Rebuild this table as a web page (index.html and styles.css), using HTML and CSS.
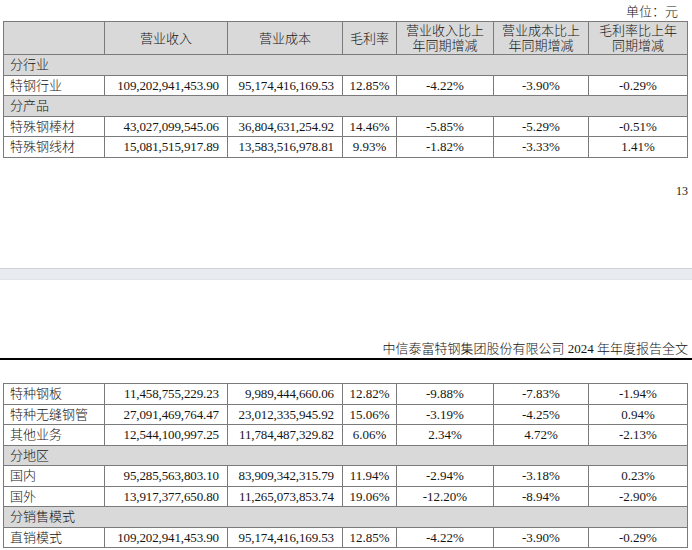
FILE: index.html
```html
<!DOCTYPE html>
<html lang="zh-CN">
<head>
<meta charset="utf-8">
<title>中信泰富特钢集团股份有限公司 2024 年年度报告全文</title>
<link rel="stylesheet" href="styles.css">
</head>
<body>
<div class="page page-top">
  <div class="unit">单位：元</div>
  <table class="data">
    <colgroup>
      <col class="c1"><col class="c2"><col class="c3"><col class="c4"><col class="c5"><col class="c6"><col class="c7">
    </colgroup>
    <thead>
      <tr class="head">
        <th></th>
        <th>营业收入</th>
        <th>营业成本</th>
        <th>毛利率</th>
        <th>营业收入比上<br>年同期增减</th>
        <th>营业成本比上<br>年同期增减</th>
        <th>毛利率比上年<br>同期增减</th>
      </tr>
    </thead>
    <tbody>
      <tr class="section"><td colspan="7">分行业</td></tr>
      <tr><td class="name">特钢行业</td><td class="num">109,202,941,453.90</td><td class="num">95,174,416,169.53</td><td class="pct">12.85%</td><td class="pct">-4.22%</td><td class="pct">-3.90%</td><td class="pct">-0.29%</td></tr>
      <tr class="section"><td colspan="7">分产品</td></tr>
      <tr><td class="name">特殊钢棒材</td><td class="num">43,027,099,545.06</td><td class="num">36,804,631,254.92</td><td class="pct">14.46%</td><td class="pct">-5.85%</td><td class="pct">-5.29%</td><td class="pct">-0.51%</td></tr>
      <tr><td class="name">特殊钢线材</td><td class="num">15,081,515,917.89</td><td class="num">13,583,516,978.81</td><td class="pct">9.93%</td><td class="pct">-1.82%</td><td class="pct">-3.33%</td><td class="pct">1.41%</td></tr>
    </tbody>
  </table>
  <div class="pageno">13</div>
</div>
<div class="page-gap"></div>
<div class="page page-bottom">
  <div class="running-head">中信泰富特钢集团股份有限公司 2024 年年度报告全文</div>
  <div class="body-area">
    <table class="data">
      <colgroup>
        <col class="c1"><col class="c2"><col class="c3"><col class="c4"><col class="c5"><col class="c6"><col class="c7">
      </colgroup>
      <tbody>
        <tr><td class="name">特种钢板</td><td class="num">11,458,755,229.23</td><td class="num">9,989,444,660.06</td><td class="pct">12.82%</td><td class="pct">-9.88%</td><td class="pct">-7.83%</td><td class="pct">-1.94%</td></tr>
        <tr><td class="name">特种无缝钢管</td><td class="num">27,091,469,764.47</td><td class="num">23,012,335,945.92</td><td class="pct">15.06%</td><td class="pct">-3.19%</td><td class="pct">-4.25%</td><td class="pct">0.94%</td></tr>
        <tr><td class="name">其他业务</td><td class="num">12,544,100,997.25</td><td class="num">11,784,487,329.82</td><td class="pct">6.06%</td><td class="pct">2.34%</td><td class="pct">4.72%</td><td class="pct">-2.13%</td></tr>
        <tr class="section"><td colspan="7">分地区</td></tr>
        <tr><td class="name">国内</td><td class="num">95,285,563,803.10</td><td class="num">83,909,342,315.79</td><td class="pct">11.94%</td><td class="pct">-2.94%</td><td class="pct">-3.18%</td><td class="pct">0.23%</td></tr>
        <tr><td class="name">国外</td><td class="num">13,917,377,650.80</td><td class="num">11,265,073,853.74</td><td class="pct">19.06%</td><td class="pct">-12.20%</td><td class="pct">-8.94%</td><td class="pct">-2.90%</td></tr>
        <tr class="section"><td colspan="7">分销售模式</td></tr>
        <tr><td class="name">直销模式</td><td class="num">109,202,941,453.90</td><td class="num">95,174,416,169.53</td><td class="pct">12.85%</td><td class="pct">-4.22%</td><td class="pct">-3.90%</td><td class="pct">-0.29%</td></tr>
      </tbody>
    </table>
  </div>
</div>
</body>
</html>
```

FILE: styles.css
```css
* { box-sizing: border-box; }

html, body {
  margin: 0;
  padding: 0;
  background: #ffffff;
}

body {
  width: 692px;
  height: 550px;
  overflow: hidden;
  font-family: "Liberation Serif", "Noto Sans CJK SC", serif;
  font-size: 13px;
  font-weight: 300;
  color: #151515;
}

.page-top {
  height: 268px;
  padding: 0 5px 0 3px;
}

.unit {
  height: 21px;
  line-height: 21px;
  padding-top: 1px;
  padding-right: 9px;
  text-align: right;
  font-size: 13px;
}

.data {
  width: 684px;
  table-layout: fixed;
  border-collapse: collapse;
}

.data .c1 { width: 101px; }
.data .c2 { width: 123px; }
.data .c3 { width: 115px; }
.data .c4 { width: 54px; }
.data .c5 { width: 97px; }
.data .c6 { width: 95px; }
.data .c7 { width: 99px; }

.data th,
.data td {
  border: 1px solid #7a7a7a;
  padding: 0 6px;
  white-space: nowrap;
  vertical-align: middle;
  line-height: 15px;
}

.data tr { height: 20.5px; }

.data .head { height: 33px; }

.data th {
  background: #d9d9d9;
  font-weight: 300;
  text-align: center;
  padding: 0 2px;
}

.data .section td {
  background: #d9d9d9;
  text-align: left;
}

.data .name { text-align: left; }

.data .num {
  text-align: right;
  padding-right: 8px;
  letter-spacing: -0.12px;
}

.data .pct {
  text-align: center;
  padding: 0 2px;
}

.pageno {
  margin-top: 27px;
  margin-right: -1px;
  text-align: right;
  font-size: 12px;
  line-height: 12px;
}

.page-gap {
  height: 12px;
  background: #e8ecf0;
  border-top: 1px solid #cfd3d7;
  border-bottom: 1px solid #e0e4e8;
}

.running-head {
  height: 80px;
  padding-top: 60px;
  padding-right: 4px;
  line-height: 18px;
  text-align: right;
  font-size: 13px;
  border-bottom: 2px solid #000000;
}

.body-area {
  padding: 23px 5px 0 3px;
}
```
